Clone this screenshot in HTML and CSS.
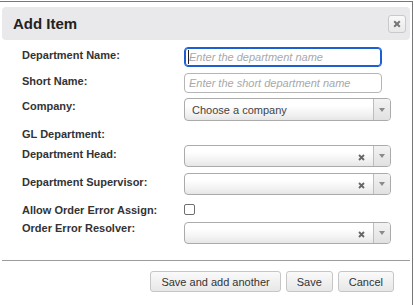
FILE: index.html
```html
<!DOCTYPE html>
<html lang="en">
<head>
    <meta charset="UTF-8">
    <meta name="viewport" content="width=device-width, initial-scale=1.0">
    <title>Add Item</title>
    <link rel="stylesheet" href="styles.css">
</head>
<body>

    <div class="dialog">
        <div class="dialog-header">
            <h2 class="dialog-title">Add Item</h2>
            <button class="close-btn" type="button">
                <svg width="8" height="8" viewBox="0 0 8 8"><path d="M1.2 1.2L6.8 6.8M6.8 1.2L1.2 6.8" stroke="#777" stroke-width="2"/></svg>
            </button>
        </div>

        <form class="dialog-body">
            <div class="row row-name">
                <label class="label">Department Name:</label>
                <span class="field-wrap">
                    <input class="text-input focused" type="text" placeholder="Enter the department name">
                    <span class="caret"></span>
                </span>
            </div>
            <div class="row row-short">
                <label class="label">Short Name:</label>
                <input class="text-input" type="text" placeholder="Enter the short department name">
            </div>
            <div class="row row-company">
                <label class="label">Company:</label>
                <div class="select select-tall">
                    <span class="select-text">Choose a company</span>
                    <span class="select-arrow"><svg width="6" height="4" viewBox="0 0 6 4"><path d="M0 0H6L3 4Z" fill="#8a8a8a"/></svg></span>
                </div>
            </div>
            <div class="row row-gl">
                <label class="label label-flush">GL Department:</label>
            </div>
            <div class="row row-head">
                <label class="label label-low">Department Head:</label>
                <div class="select">
                    <span class="select-text"></span>
                    <svg class="select-clear" width="7" height="7" viewBox="0 0 7 7"><path d="M1 1L6 6M6 1L1 6" stroke="#666" stroke-width="1.8"/></svg>
                    <span class="select-arrow"><svg width="6" height="4" viewBox="0 0 6 4"><path d="M0 0H6L3 4Z" fill="#8a8a8a"/></svg></span>
                </div>
            </div>
            <div class="row row-super">
                <label class="label label-low">Department Supervisor:</label>
                <div class="select">
                    <span class="select-text"></span>
                    <svg class="select-clear" width="7" height="7" viewBox="0 0 7 7"><path d="M1 1L6 6M6 1L1 6" stroke="#666" stroke-width="1.8"/></svg>
                    <span class="select-arrow"><svg width="6" height="4" viewBox="0 0 6 4"><path d="M0 0H6L3 4Z" fill="#8a8a8a"/></svg></span>
                </div>
            </div>
            <div class="row row-check">
                <label class="label label-check">Allow Order Error Assign:</label>
                <input class="checkbox" type="checkbox">
            </div>
            <div class="row row-resolver">
                <label class="label label-flush">Order Error Resolver:</label>
                <div class="select">
                    <span class="select-text"></span>
                    <svg class="select-clear" width="7" height="7" viewBox="0 0 7 7"><path d="M1 1L6 6M6 1L1 6" stroke="#666" stroke-width="1.8"/></svg>
                    <span class="select-arrow"><svg width="6" height="4" viewBox="0 0 6 4"><path d="M0 0H6L3 4Z" fill="#8a8a8a"/></svg></span>
                </div>
            </div>
        </form>

        <div class="dialog-footer">
            <button class="btn" type="button">Save and add another</button>
            <button class="btn" type="button">Save</button>
            <button class="btn" type="button">Cancel</button>
        </div>
    </div>

</body>
</html>
```

FILE: styles.css
```css
body {
    margin: 0;
    background-color: #fff;
    font-family: "Liberation Sans", Arial, sans-serif;
    color: #333;
}

.dialog {
    box-sizing: border-box;
    width: 414px;
    margin: 1px 0 0 -1px;
    border: 1px solid #777;
    padding: 5px 2px 0;
    background-color: #fff;
}

.dialog-header {
    display: flex;
    align-items: center;
    justify-content: space-between;
    height: 33px;
    padding: 0 4px 0 11px;
    background-color: #e9e9ec;
    border-radius: 4px;
}
.dialog-title {
    margin: 0;
    font-size: 15px;
    font-weight: bold;
    color: #222;
}
.close-btn {
    box-sizing: border-box;
    width: 18px;
    height: 18px;
    padding: 0;
    margin-top: 1px;
    display: flex;
    align-items: center;
    justify-content: center;
    border: 1px solid #c9c9c9;
    border-radius: 3px;
    background: linear-gradient(#f9f9f9, #e9e9e9);
}

.dialog-body {
    margin: 0;
    padding: 7px 0 16px 20px;
}
.row {
    display: flex;
    align-items: flex-start;
}
.row-short { margin-top: 6px; }
.row-company { margin-top: 5px; }
.row-gl { margin-top: 7px; }
.row-head { margin-top: 4px; }
.row-super { margin-top: 6px; }
.row-check { margin-top: 5px; }
.row-resolver { margin-top: 5px; }

.label {
    flex: none;
    width: 162px;
    padding-top: 2px;
    font-size: 11px;
    line-height: 13px;
    font-weight: bold;
    color: #333;
}
.label-flush { padding-top: 0; }
.label-low { padding-top: 3px; }
.label-check { padding-top: 4px; }

.field-wrap {
    position: relative;
    display: block;
}
.text-input {
    box-sizing: border-box;
    width: 198px;
    height: 20px;
    margin: 0;
    padding: 0 4px;
    border: 1px solid #b5b5b5;
    border-radius: 4px;
    font-family: "Liberation Sans", Arial, sans-serif;
    font-size: 11px;
    outline: none;
}
.text-input::placeholder {
    color: #a8a8a8;
    font-style: italic;
}
.text-input.focused {
    border-color: #1b5fd1;
    box-shadow: inset 0 0 0 1px #1b5fd1;
}
.caret {
    position: absolute;
    left: 4px;
    top: 3px;
    width: 1px;
    height: 14px;
    background-color: #222;
}

.select {
    box-sizing: border-box;
    width: 207px;
    height: 22px;
    display: flex;
    align-items: center;
    border: 1px solid #ababab;
    border-radius: 4px;
    background: linear-gradient(#fff 30%, #f1f1f1 75%, #e6e6e6);
}
.select-tall { height: 23px; }
.select-text {
    flex: 1;
    padding-left: 7px;
    font-size: 11px;
    color: #444;
}
.select-clear {
    margin: 3px 8px 0 0;
}
.select-arrow {
    box-sizing: border-box;
    width: 17px;
    align-self: stretch;
    display: flex;
    align-items: center;
    justify-content: center;
    border-left: 1px solid #bdbdbd;
    border-radius: 0 3px 3px 0;
    background: linear-gradient(#f3f3f3, #e1e1e1);
}

.checkbox {
    -webkit-appearance: none;
    appearance: none;
    box-sizing: border-box;
    width: 11px;
    height: 11px;
    margin: 4px 0 0;
    border: 1px solid #6e6e6e;
    border-radius: 2px;
    background-color: #fff;
}

.dialog-footer {
    display: flex;
    justify-content: flex-end;
    gap: 5px;
    padding: 10px 16px 20px;
    border-top: 1px solid #9d9d9d;
}
.btn {
    height: 21px;
    padding: 0 10px;
    border: 1px solid #c6c6c6;
    border-radius: 3px;
    background: linear-gradient(#fafafa, #e7e7e7);
    font-family: "Liberation Sans", Arial, sans-serif;
    font-size: 11px;
    color: #333;
}
```
